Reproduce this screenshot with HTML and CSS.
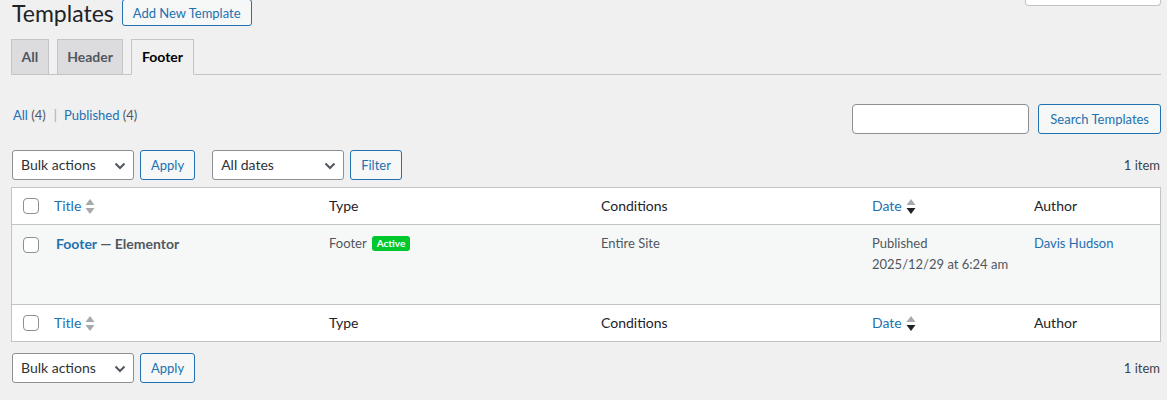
FILE: index.html
```html
<!DOCTYPE html>
<html lang="en">
<head>
  <meta charset="UTF-8">
  <title>Templates</title>
  <link rel="stylesheet" href="styles.css">
</head>
<body>

<div class="wrap">
  <div class="page-head">
    <h1>Templates</h1>
    <a class="btn btn-add" href="#">Add New Template</a>
    <div class="screen-tab"></div>
  </div>

  <nav class="nav-tabs">
    <a class="nav-tab" href="#">All</a>
    <a class="nav-tab" href="#">Header</a>
    <a class="nav-tab active" href="#">Footer</a>
  </nav>

  <div class="filters">
    <ul class="subsubsub">
      <li><a href="#">All <span class="count">(4)</span></a><span class="sep">|</span></li>
      <li><a href="#">Published <span class="count">(4)</span></a></li>
    </ul>
    <div class="search-box">
      <input type="search" class="search-input">
      <button class="btn btn-search">Search Templates</button>
    </div>
  </div>

  <div class="tablenav">
    <div class="fake-select bulk">Bulk actions
      <svg class="chev" width="12" height="8" viewBox="0 0 12 8"><path d="M1.5 1.5 L6 6 L10.5 1.5" fill="none" stroke="#50575e" stroke-width="2"/></svg>
    </div>
    <button class="btn">Apply</button>
    <div class="fake-select dates">All dates
      <svg class="chev" width="12" height="8" viewBox="0 0 12 8"><path d="M1.5 1.5 L6 6 L10.5 1.5" fill="none" stroke="#50575e" stroke-width="2"/></svg>
    </div>
    <button class="btn">Filter</button>
    <span class="num-items">1 item</span>
  </div>

  <table class="list-table">
    <colgroup>
      <col class="c-cb"><col class="c-title"><col class="c-type"><col class="c-cond"><col class="c-date"><col class="c-author">
    </colgroup>
    <thead>
      <tr>
        <td class="check"><span class="cbox"></span></td>
        <th><a class="sort" href="#">Title
          <svg width="10" height="17" viewBox="0 0 10 17"><polygon points="5,1 9.5,7 0.5,7" fill="#a7aaad"/><polygon points="0.5,10 9.5,10 5,16" fill="#a7aaad"/></svg></a></th>
        <th>Type</th>
        <th>Conditions</th>
        <th><a class="sort" href="#">Date
          <svg width="10" height="17" viewBox="0 0 10 17"><polygon points="5,1 9.5,7 0.5,7" fill="#a7aaad"/><polygon points="0.5,10 9.5,10 5,16" fill="#1d2327"/></svg></a></th>
        <th>Author</th>
      </tr>
    </thead>
    <tbody>
      <tr>
        <td class="check"><span class="cbox"></span></td>
        <td class="title-cell"><strong><a href="#">Footer</a> — Elementor</strong></td>
        <td>Footer <span class="badge">Active</span></td>
        <td>Entire Site</td>
        <td>Published<br>2025/12/29 at 6:24 am</td>
        <td><a href="#">Davis Hudson</a></td>
      </tr>
    </tbody>
    <tfoot>
      <tr>
        <td class="check"><span class="cbox"></span></td>
        <th><a class="sort" href="#">Title
          <svg width="10" height="17" viewBox="0 0 10 17"><polygon points="5,1 9.5,7 0.5,7" fill="#a7aaad"/><polygon points="0.5,10 9.5,10 5,16" fill="#a7aaad"/></svg></a></th>
        <th>Type</th>
        <th>Conditions</th>
        <th><a class="sort" href="#">Date
          <svg width="10" height="17" viewBox="0 0 10 17"><polygon points="5,1 9.5,7 0.5,7" fill="#a7aaad"/><polygon points="0.5,10 9.5,10 5,16" fill="#1d2327"/></svg></a></th>
        <th>Author</th>
      </tr>
    </tfoot>
  </table>

  <div class="tablenav bottom">
    <div class="fake-select bulk">Bulk actions
      <svg class="chev" width="12" height="8" viewBox="0 0 12 8"><path d="M1.5 1.5 L6 6 L10.5 1.5" fill="none" stroke="#50575e" stroke-width="2"/></svg>
    </div>
    <button class="btn">Apply</button>
    <span class="num-items">1 item</span>
  </div>
</div>

</body>
</html>
```

FILE: styles.css
```css
html, body {
  margin: 0;
  background-color: #f0f0f1;
}

body {
  font-family: Lato, "Noto Sans", sans-serif;
  font-size: 13px;
  color: #3c434a;
}

a {
  color: #2271b1;
  text-decoration: none;
}

.wrap {
  margin: 0 6px 0 11px;
}

/* page title row */
.page-head {
  display: flex;
  align-items: flex-start;
  height: 26px;
}

.page-head h1 {
  margin: 0 8px 0 1px;
  font-size: 23px;
  font-weight: 400;
  line-height: 26px;
  color: #1d2327;
}

.btn {
  display: inline-flex;
  align-items: center;
  box-sizing: border-box;
  height: 30px;
  padding: 0 10px;
  border: 1px solid #2271b1;
  border-radius: 3px;
  background-color: #f6f7f7;
  color: #2271b1;
  font-family: inherit;
  font-size: 13px;
  cursor: pointer;
}

.btn-add {
  height: 27px;
  margin-top: -1px;
}

.btn-search {
  padding: 0 11px;
}

.screen-tab {
  margin-left: auto;
  width: 136px;
  height: 6px;
  box-sizing: border-box;
  background-color: #fff;
  border: 1px solid #c3c4c7;
  border-top: none;
  border-radius: 0 0 4px 4px;
}

/* tabs */
.nav-tabs {
  display: flex;
  gap: 8px;
  margin-top: 13px;
  border-bottom: 1px solid #c3c4c7;
}

.nav-tab {
  margin-bottom: -1px;
  padding: 5px 9.5px;
  line-height: 24px;
  font-size: 14px;
  font-weight: 700;
  color: #50575e;
  background-color: #dcdcde;
  border: 1px solid #c3c4c7;
}

.nav-tab.active {
  color: #000;
  background-color: #f0f0f1;
  border-bottom-color: #f0f0f1;
}

/* views + search */
.filters {
  display: flex;
  justify-content: space-between;
  align-items: flex-start;
  margin-top: 29px;
}

.subsubsub {
  display: flex;
  margin: 0;
  padding: 0 0 0 2px;
  list-style: none;
  line-height: 22px;
  color: #646970;
}

.subsubsub .count {
  color: #50575e;
}

.subsubsub .sep {
  margin: 0 7px 0 8px;
  color: #a7aaad;
}

.search-box {
  display: flex;
  gap: 9px;
}

.search-input {
  box-sizing: border-box;
  width: 177px;
  height: 30px;
  border: 1px solid #8c8f94;
  border-radius: 4px;
  background-color: #fff;
}

/* table nav */
.tablenav {
  display: flex;
  align-items: center;
  height: 30px;
  margin: 16px 0 7px;
  padding-left: 1px;
}

.tablenav.bottom {
  margin: 11px 0 0;
}

.tablenav .btn {
  margin-left: 6px;
}

.fake-select {
  position: relative;
  box-sizing: border-box;
  height: 30px;
  padding: 0 24px 0 8px;
  line-height: 28px;
  font-size: 14px;
  color: #2c3338;
  background-color: #fff;
  border: 1px solid #8c8f94;
  border-radius: 3px;
}

.fake-select.bulk {
  width: 122px;
}

.fake-select.dates {
  width: 132px;
  margin-left: 17px;
}

.chev {
  position: absolute;
  right: 7px;
  top: 11px;
}

.num-items {
  margin-left: auto;
  padding-right: 1px;
  color: #3c434a;
}

/* list table */
.list-table {
  width: 100%;
  table-layout: fixed;
  border-spacing: 0;
  background-color: #fff;
  border: 1px solid #c3c4c7;
}

.c-cb { width: 32px; }
.c-title { width: 275px; }
.c-type { width: 272px; }
.c-cond { width: 271px; }
.c-date { width: 162px; }
.c-author { width: 136px; }

.list-table th,
.list-table td {
  padding: 8px 10px;
  text-align: left;
  vertical-align: top;
  line-height: 20px;
}

.list-table thead th,
.list-table tfoot th {
  font-size: 14px;
  font-weight: 400;
  color: #1d2327;
}

.list-table thead th,
.list-table thead td {
  border-bottom: 1px solid #c3c4c7;
}

.list-table tfoot th,
.list-table tfoot td {
  border-top: 1px solid #c3c4c7;
}

.list-table td.check {
  padding: 10px 0 0 11px;
}

.list-table tbody td.check {
  padding-top: 12px;
}

.cbox {
  display: block;
  box-sizing: border-box;
  width: 16px;
  height: 16px;
  border: 1px solid #8c8f94;
  border-radius: 4px;
  background-color: #fff;
}

.sort {
  display: inline-flex;
  align-items: center;
  gap: 4px;
}

.list-table tbody tr {
  background-color: #f6f7f7;
}

.list-table tbody td {
  height: 63px;
  color: #50575e;
  line-height: 21px;
}

.title-cell {
  padding-left: 12px !important;
  font-size: 14px;
}

.title-cell strong {
  font-weight: 700;
  color: #50575e;
}

.badge {
  display: inline-block;
  margin-left: 2px;
  padding: 0 5px;
  line-height: 15px;
  font-size: 10px;
  font-weight: 700;
  color: #fff;
  background-color: #00c72c;
  border-radius: 3px;
  vertical-align: 1px;
}
```
